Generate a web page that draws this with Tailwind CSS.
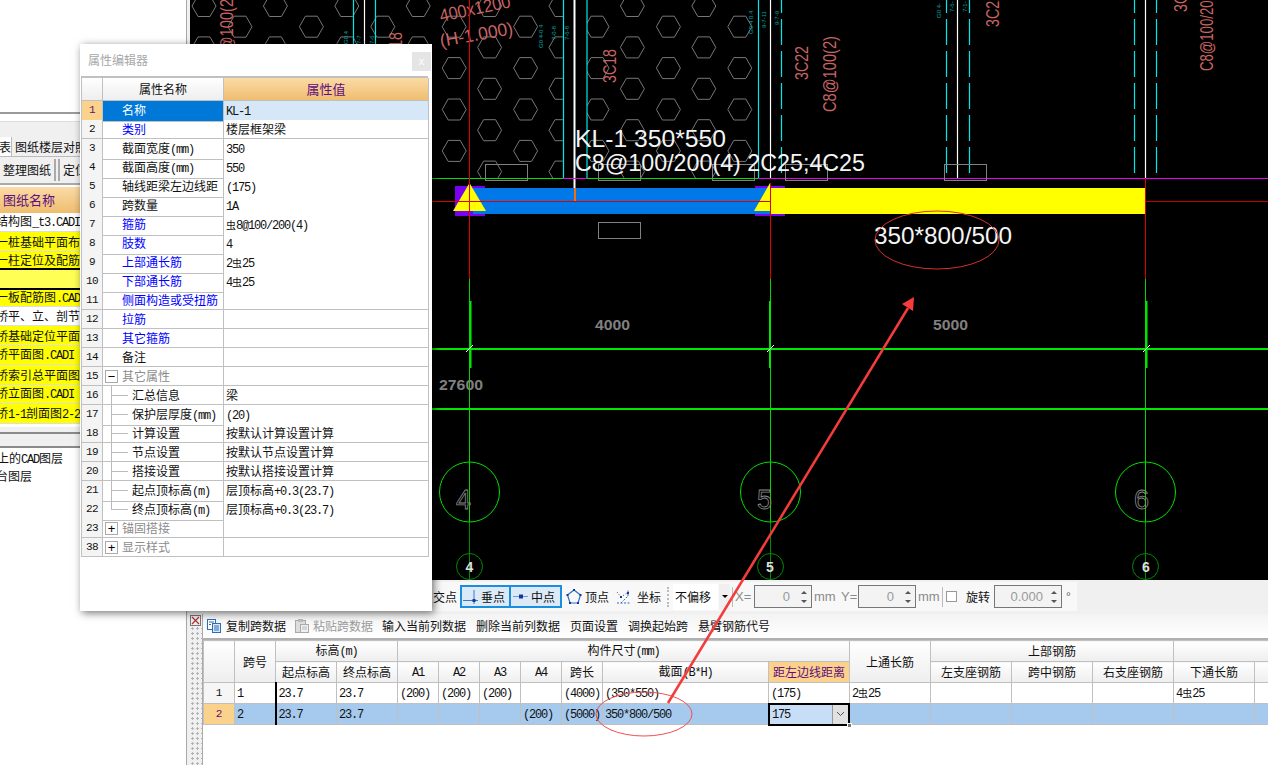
<!DOCTYPE html>
<html lang="zh">
<head>
  <meta charset="UTF-8" />
  <title>属性编辑器</title>
  <script src="https://cdn.jsdelivr.net/npm/@tailwindcss/browser@4"></script>
</head>
<body class="bg-white">
<div class="relative w-[1268px] h-[765px] overflow-hidden flex bg-white text-[12px] text-[#111] font-['Noto_Sans_CJK_SC','Liberation_Sans',sans-serif]">

  <!-- left panel -->
  <aside class="w-[186px] h-full flex flex-col shrink-0 overflow-hidden">
    <div class="h-[114px] border-b-2 border-[#9a9a9a] shrink-0"></div>
    <div class="h-[8px] bg-white border-b border-[#ddd] shrink-0"></div>
    <div class="h-[15px] bg-[#f0f0f0] shrink-0"></div>
    <div class="h-[20px] bg-[#f0f0f0] flex items-end shrink-0 border-b border-[#bbb] whitespace-nowrap">
      <div class="w-[12px] h-full bg-white border-r border-[#bbb] overflow-hidden flex justify-end items-center">表</div>
      <div class="px-[3px] h-[19px] leading-[19px]">图纸楼层对照表</div>
    </div>
    <div class="h-[28px] flex items-center gap-[2px] shrink-0 bg-[#f0f0f0] border-b-2 border-[#aaa] whitespace-nowrap">
      <div class="w-[56px] h-[22px] border-r-2 border-[#aaa] text-center leading-[22px]">整理图纸</div>
      <div class="pl-[3px] h-[22px] border-l-2 border-[#aaa] leading-[22px]">定位图纸</div>
    </div>
    <div class="h-[26px] mt-[2px] bg-gradient-to-b from-[#fbdba6] to-[#efbd6f] text-[#5f0f7f] text-[13px] leading-[26px] pl-[3px] shrink-0">图纸名称</div>
    <div id="drawings" class="flex flex-col shrink-0"></div>
    <div class="h-[3px] shrink-0"></div>
    <div class="h-[7px] bg-[#f0f0f0] border-b-2 border-[#8a8a8a] shrink-0"></div>
    <div class="h-[14px] bg-[#f0f0f0] border-b-2 border-[#8a8a8a] shrink-0"></div>
    <div class="pt-[2px] leading-[15px] whitespace-nowrap">
      <div class="-ml-[3px]" id="layer1"></div>
      <div class="-ml-[4px]">台图层</div>
    </div>
  </aside>
  <div class="w-[4px] h-full shrink-0 border-l border-[#a8a8a8] bg-[#f0f0f0]"></div>

  <main class="flex-1 min-w-0 flex flex-col">
    <!-- CAD canvas -->
    <div class="h-[580px] bg-black shrink-0 overflow-hidden">
      <svg id="cad" width="1078" height="580" viewBox="190 0 1078 580" font-family="Liberation Sans, sans-serif">
        <defs>
          <clipPath id="hexClip">
            <rect x="190" y="0" width="373" height="178"></rect>
            <rect x="587" y="0" width="170" height="178"></rect>
          </clipPath>
        </defs>
        <g id="hexes" clip-path="url(#hexClip)" fill="none" stroke="#777" stroke-width="1"></g>

        <!-- red labels -->
        <g fill="#c86464" font-size="18">
          <text transform="translate(441,22) rotate(-12)" textLength="72" lengthAdjust="spacingAndGlyphs">400x1200</text>
          <text transform="translate(441,47) rotate(-10)" textLength="74" lengthAdjust="spacingAndGlyphs">(H-1.000)</text>
          <text transform="translate(616,83) rotate(-90)" textLength="34" lengthAdjust="spacingAndGlyphs">3C18</text>
          <text transform="translate(808,80) rotate(-90)" textLength="34" lengthAdjust="spacingAndGlyphs">3C22</text>
          <text transform="translate(836,112) rotate(-90)" textLength="76" lengthAdjust="spacingAndGlyphs">C8@100(2)</text>
          <text transform="translate(999,27) rotate(-90)" textLength="34" lengthAdjust="spacingAndGlyphs">3C22</text>
          <text transform="translate(1187,12) rotate(-90)" textLength="34" lengthAdjust="spacingAndGlyphs">3C22</text>
          <text transform="translate(1213,71) rotate(-90)" textLength="78" lengthAdjust="spacingAndGlyphs">C8@100/200</text>
          <text transform="translate(402,66) rotate(-90)" textLength="34" lengthAdjust="spacingAndGlyphs">3C18</text>
          <text transform="translate(233,70) rotate(-90)" textLength="76" lengthAdjust="spacingAndGlyphs">C8@100(2)</text>
        </g>

        <!-- teal small labels -->
        <g fill="#00a8a8" font-size="6">
          <text transform="translate(543,48) rotate(-90)">G0 4-0 4</text>
          <text transform="translate(556,40) rotate(-90)">7-0-8</text>
          <text transform="translate(569,40) rotate(-90)">7-6-8</text>
          <text transform="translate(753,34) rotate(-90)">G0-4 0.4</text>
          <text transform="translate(766,28) rotate(-90)">9-7-11</text>
          <text transform="translate(779,25) rotate(-90)">9-7-9</text>
          <text transform="translate(941,18) rotate(-90)">G0 4-</text>
          <text transform="translate(954,12) rotate(-90)">7-6-</text>
          <text transform="translate(967,12) rotate(-90)">7-1-</text>
          <text transform="translate(348,44) rotate(-90)">G0.4</text>
          <text transform="translate(361,44) rotate(-90)">7-7</text>
          <text transform="translate(374,44) rotate(-90)">7-6</text>
        </g>

        <!-- rebar lines -->
        <g stroke="#00e8e8" stroke-width="1.2">
          <path d="M563.5 0V178M587 0V178M758.5 0V178M353.5 0V178M375.5 0V178"></path>
          <path stroke-dasharray="26 6" stroke-dashoffset="13" d="M781.5 0V173M946.5 0V173M969.5 0V173M1134.5 0V173M1156.5 0V173"></path>
        </g>
        <g stroke="#fff" stroke-width="1.2">
          <path d="M770.5 0V178M957.5 0V178M1145.5 0V178M364.5 0V178"></path>
          <path stroke-width="2" d="M574.5 0V188"></path>
        </g>
        <path d="M190 178.5H563M587 178.5H758" stroke="#00e000" stroke-width="1"></path>
        <path d="M563 178.5H587M758 178.5H1268" stroke="#f000f0" stroke-width="1"></path>

        <!-- beam -->
        <rect x="455" y="186" width="30" height="30" fill="#7a00f0"></rect>
        <rect x="755" y="186" width="30" height="30" fill="#7a00f0"></rect>
        <rect x="473" y="188" width="297" height="26" fill="#0078e8"></rect>
        <rect x="770" y="188" width="376" height="26" fill="#ffff00"></rect>
        <polygon points="469.5,183 486,211 453,211" fill="#ffff00"></polygon>
        <polygon points="770,183 770,211 754,211" fill="#ffff00"></polygon>
        <rect x="574" y="188" width="2" height="13" fill="#f07010"></rect>
        <path d="M432 201.5H770" stroke="#e00000" stroke-width="1"></path>
        <path d="M1146 201.5H1268" stroke="#c00000" stroke-width="1"></path>

        <!-- axis lines -->
        <g stroke="#e00000" stroke-width="1">
          <path d="M469.5 0V279M770.5 183V279M1145.5 178V279"></path>
        </g>
        <g stroke="#00d800" stroke-width="1">
          <path d="M469.5 279V522M770.5 279V522M1145.5 279V522"></path>
        </g>
        <g stroke="#008c00" stroke-width="1">
          <path d="M469.5 522V580M770.5 522V580M1145.5 522V580"></path>
        </g>
        <g stroke="#00e800" stroke-width="2">
          <path d="M432 349H1268M432 409H1268"></path>
          <path d="M470.5 301V368M770 301V368M1146.5 301V368"></path>
        </g>
        <path d="M466 352L473 345M767 352L774 345M1143 352L1150 345" stroke="#fff" stroke-width="1"></path>

        <!-- gray boxes -->
        <g fill="none" stroke="#808080" stroke-width="1">
          <rect x="485.5" y="164.5" width="42" height="16"></rect>
          <rect x="598.5" y="164.5" width="42" height="16"></rect>
          <rect x="712.5" y="164.5" width="42" height="16"></rect>
          <rect x="785.5" y="164.5" width="42" height="16"></rect>
          <rect x="944.5" y="164.5" width="42" height="16"></rect>
          <rect x="598.5" y="222.5" width="42" height="16"></rect>
        </g>

        <!-- axis bubbles -->
        <g fill="none" stroke="#00e000" stroke-width="1">
          <circle cx="469.5" cy="492" r="30"></circle>
          <circle cx="770.5" cy="492" r="30"></circle>
          <circle cx="1145.5" cy="492" r="30"></circle>
        </g>
        <g fill="none" stroke="#008c00" stroke-width="1">
          <circle cx="469.5" cy="566.5" r="13"></circle>
          <circle cx="770.5" cy="566.5" r="13"></circle>
          <circle cx="1145.5" cy="566.5" r="13"></circle>
        </g>
        <g fill="none" stroke="#8a8a8a" stroke-width="0.8" font-size="27">
          <text x="456" y="509">4</text>
          <text x="757" y="509">5</text>
          <text x="1134" y="509">6</text>
        </g>
        <g fill="#ddd" font-size="14" font-weight="700" text-anchor="middle">
          <text x="469.5" y="572">4</text>
          <text x="770" y="572">5</text>
          <text x="1146" y="572">6</text>
        </g>
        <g fill="#808080" font-size="15" font-weight="700">
          <text x="595" y="330" textLength="35" lengthAdjust="spacingAndGlyphs">4000</text>
          <text x="933" y="330" textLength="35" lengthAdjust="spacingAndGlyphs">5000</text>
          <text x="439" y="390" textLength="44" lengthAdjust="spacingAndGlyphs">27600</text>
        </g>

        <!-- beam annotation -->
        <g fill="#f4f4f4" font-size="24">
          <text x="575" y="147" textLength="151" lengthAdjust="spacingAndGlyphs">KL-1 350*550</text>
          <text x="575" y="171" textLength="290" lengthAdjust="spacingAndGlyphs">C8@100/200(4) 2C25;4C25</text>
          <text x="874" y="244" textLength="138" lengthAdjust="spacingAndGlyphs">350*800/500</text>
        </g>
      </svg>
    </div>

    <!-- snap toolbar -->
    <div class="h-[34px] shrink-0 bg-[#f0f0f0] flex items-start whitespace-nowrap">
      <div class="ml-[242px] mt-[2px] h-[29px] w-[645px] bg-[#f8f8f8] flex items-center">
        <span class="w-[28px] pl-[1px]">交点</span>
        <div class="w-[51px] h-[23px] border-2 border-[#1a8fe0] bg-[#dce9f7] flex items-center gap-[3px] pl-[1px]">
          <svg width="15" height="15" viewBox="0 0 15 15"><path d="M0 11.5H15M11 1V15" stroke="#3a78c8" fill="none"></path><rect x="9.5" y="10" width="3" height="3" fill="#14389a"></rect></svg>
          <span>垂点</span>
        </div>
        <div class="w-[51px] h-[23px] border-2 border-l-0 border-[#1a8fe0] bg-[#dce9f7] flex items-center gap-[3px] pl-[2px]">
          <svg width="15" height="15" viewBox="0 0 15 15"><path d="M0 7.5H16" stroke="#6a9ad8" fill="none"></path><rect x="6" y="5.5" width="4" height="4" fill="#14389a"></rect></svg>
          <span>中点</span>
        </div>
        <svg class="ml-[4px]" width="16" height="17" viewBox="0 0 16 17"><polygon points="8,2 14.5,7 12,15 4,15 1.5,7" fill="none" stroke="#2a70c8" stroke-width="1.2"></polygon><g fill="#14389a"><rect x="7" y="1" width="2" height="2"></rect><rect x="0.5" y="6" width="2" height="2"></rect><rect x="13.5" y="6" width="2" height="2"></rect><rect x="3" y="14" width="2" height="2"></rect><rect x="11" y="14" width="2" height="2"></rect></g></svg>
        <span class="ml-[3px]">顶点</span>
        <svg class="ml-[7px]" width="16" height="17" viewBox="0 0 16 17"><path d="M5 15L12 8M12 8V1M1 15H15" stroke="#2a70c8" fill="none" stroke-dasharray="2 1.5"></path><path d="M1 4L5 9L11 5" stroke="#444" fill="none" stroke-dasharray="1 2"></path><g fill="#14389a"><rect x="4" y="8" width="2" height="2"></rect><rect x="11" y="4" width="2" height="2"></rect></g></svg>
        <span class="ml-[5px]">坐标</span>
        <div class="ml-[6px] w-[2px] h-[20px] border-l-2 border-dotted border-[#bbb]"></div>
        <div class="ml-[4px] w-[45px] h-[26px] bg-white leading-[26px] pl-[2px]">不偏移</div>
        <div class="w-[11px] h-[26px] ml-[1px] bg-[#f0f0f0] flex items-center justify-center"><div class="w-0 h-0 border-x-[3px] border-x-transparent border-t-[3px] border-t-black"></div></div>
        <div class="ml-[2px] w-px h-[20px] bg-[#bbb]"></div>
        <span class="ml-[2px] w-[19px] text-[#8a8a8a] font-['Liberation_Sans'] text-[13px]">X=</span>
        <div class="w-[58px] h-[23px] border border-[#777] bg-[#f3f3f3] flex items-center justify-end text-[#9a9a9a] font-['Liberation_Sans'] text-[13px]"><span>0</span>
          <div class="w-[15px] ml-[6px] flex flex-col items-center gap-[6px]"><div class="w-0 h-0 border-x-[3px] border-x-transparent border-b-[3px] border-b-[#555]"></div><div class="w-0 h-0 border-x-[3px] border-x-transparent border-t-[3px] border-t-[#555]"></div></div>
        </div>
        <span class="ml-[2px] w-[27px] text-[#8a8a8a] font-['Liberation_Sans'] text-[13px]">mm</span>
        <span class="w-[17px] text-[#8a8a8a] font-['Liberation_Sans'] text-[13px]">Y=</span>
        <div class="w-[58px] h-[23px] border border-[#777] bg-[#f3f3f3] flex items-center justify-end text-[#9a9a9a] font-['Liberation_Sans'] text-[13px]"><span>0</span>
          <div class="w-[15px] ml-[6px] flex flex-col items-center gap-[6px]"><div class="w-0 h-0 border-x-[3px] border-x-transparent border-b-[3px] border-b-[#555]"></div><div class="w-0 h-0 border-x-[3px] border-x-transparent border-t-[3px] border-t-[#555]"></div></div>
        </div>
        <span class="ml-[2px] w-[24px] text-[#8a8a8a] font-['Liberation_Sans'] text-[13px]">mm</span>
        <div class="w-px h-[20px] bg-[#bbb]"></div>
        <div class="ml-[3px] w-[11px] h-[11px] border border-[#999] bg-white"></div>
        <span class="ml-[9px] w-[28px]">旋转</span>
        <div class="w-[68px] h-[23px] border border-[#777] bg-[#f3f3f3] flex items-center justify-end text-[#9a9a9a] font-['Liberation_Sans'] text-[13px]"><span>0.000</span>
          <div class="w-[15px] ml-[3px] flex flex-col items-center gap-[6px]"><div class="w-0 h-0 border-x-[3px] border-x-transparent border-b-[3px] border-b-[#555]"></div><div class="w-0 h-0 border-x-[3px] border-x-transparent border-t-[3px] border-t-[#555]"></div></div>
        </div>
        <span class="ml-[4px] text-[#666] font-['Liberation_Sans']">°</span>
      </div>
    </div>

    <!-- grid area -->
    <div class="flex-1 min-h-0 flex">
      <div class="w-[13px] shrink-0 flex flex-col bg-[#f0f0f0] border-r border-[#aaa]">
        <svg class="shrink-0 mt-[1px]" width="11" height="11" viewBox="0 0 11 11"><rect x="0.5" y="0.5" width="10" height="10" fill="#eee" stroke="#777"></rect><path d="M2 2L9 9M9 2L2 9" stroke="#b03030" stroke-width="1.2"></path></svg>
        <div class="flex-1 bg-[radial-gradient(#b4b4b4_1px,transparent_1.2px)] bg-[size:5px_5px]"></div>
      </div>
      <div class="flex-1 min-w-0 flex flex-col">
        <div class="h-[26px] shrink-0 bg-gradient-to-b from-[#f3f3f3] to-white border-b-2 border-[#b0b0b0] flex items-center gap-[10px] whitespace-nowrap pl-[3px]">
          <div class="flex items-center gap-[4px]">
            <svg width="16" height="16" viewBox="0 0 16 16"><rect x="1.5" y="1.5" width="8" height="10" fill="#fff" stroke="#2c6cb8"></rect><rect x="6.5" y="5.5" width="8" height="9" fill="#dceaf8" stroke="#2c6cb8"></rect><path d="M3 4H8M3 6.5H5M8 8H13M8 10H13M8 12H13" stroke="#2c6cb8"></path></svg>
            <span>复制跨数据</span>
          </div>
          <div class="flex items-center gap-[3px] text-[#9a9a9a] -ml-[2px]">
            <svg width="16" height="16" viewBox="0 0 16 16"><rect x="1.5" y="2.5" width="10" height="12" fill="#ddd" stroke="#aaa"></rect><rect x="4" y="1" width="5" height="3" fill="#bbb"></rect><rect x="6.5" y="6.5" width="8" height="8" fill="#f0f0f0" stroke="#aaa"></rect><path d="M8 9H13M8 11H13" stroke="#bbb"></path></svg>
            <span>粘贴跨数据</span>
          </div>
          <span class="-ml-[1px]">输入当前列数据</span>
          <span>删除当前列数据</span>
          <span>页面设置</span>
          <span>调换起始跨</span>
          <span>悬臂钢筋代号</span>
        </div>
        <div class="flex-1 min-h-0 overflow-hidden">
          <table class="table-fixed border-collapse w-[1213px]">
            <colgroup id="cols"></colgroup>
            <tbody id="grid"></tbody>
          </table>
        </div>
      </div>
    </div>
  </main>

  <!-- annotations on top of everything -->
  <svg class="absolute left-0 top-0 pointer-events-none" width="1268" height="765" viewBox="0 0 1268 765">
    <ellipse cx="937" cy="240" rx="62" ry="29" fill="none" stroke="#d83030" stroke-width="1"></ellipse>
    <ellipse cx="644" cy="714" rx="48" ry="22" fill="none" stroke="#f05050" stroke-width="1"></ellipse>
    <path d="M668 703L908 308" stroke="#f43c3c" stroke-width="2.5" fill="none"></path>
    <polygon points="914,297 913,311 902,304" fill="#f43c3c"></polygon>
  </svg>

  <!-- property dialog -->
  <div class="absolute left-[80px] top-[44px] w-[352px] h-[567px] bg-white shadow-[2px_2px_8px_rgba(0,0,0,0.55)]">
    <div class="h-[32px] flex items-center justify-between pl-[8px] pr-[1px]">
      <span class="text-[#a8a8a8]">属性编辑器</span>
      <div class="w-[19px] h-[19px] mt-[2px] bg-[#e5e5e5] text-white text-center leading-[18px] font-['Liberation_Sans'] text-[11px]">x</div>
    </div>
    <div id="props" class="ml-[1px] w-[347px] border-t-2 border-l border-[#c0c0c0]"></div>
  </div>
</div>

<script>
  // ascii runs use a half width look next to the cjk text
  function t(s) {
    return s.replace(/[\x21-\x7e]+/g, m => `<span class="font-['Liberation_Mono'] tracking-[-1.2px]">${m}</span>`)
            .replace(/虫/g, `<span class="text-[10px]">虫</span>`);
  }

  document.getElementById('layer1').innerHTML = t('上的CAD图层');

  // hex hatch in the slab
  let hexes = '';
  for (let k = 0; k < 9; k++) {
    const y = 6 + 20.7 * k;
    const start = k % 2 ? 240 : 204;
    for (let x = start; x < 780; x += 71.4) {
      hexes += `<polygon points="${x-12},${y} ${x-6},${y-10.5} ${x+6},${y-10.5} ${x+12},${y} ${x+6},${y+10.5} ${x-6},${y+10.5}"></polygon>`;
    }
  }
  document.getElementById('hexes').innerHTML = hexes;

  // drawing list on the left
  const drawings = [
    ['结构图_t3.CADI', 'h-[19px] bg-white border-b border-[#ddd]'],
    ['一桩基础平面布置图', 'h-[20px] bg-[#ffff00] border-b border-[#ddd]'],
    ['一柱定位及配筋图', 'h-[18px] bg-[#ffff00] border-b-2 border-black'],
    ['', 'h-[20px] bg-[#ffff55] border-b-2 border-black'],
    ['一板配筋图.CADI', 'h-[17px] bg-[#ffff00] border-b border-[#ddd]'],
    ['桥平、立、剖节', 'h-[19px] bg-white border-b border-[#ddd]'],
    ['桥基础定位平面图', 'h-[20px] bg-[#ffff00] border-b border-[#ddd]'],
    ['桥平面图.CADI', 'h-[19px] bg-[#ffff00] border-b border-[#ddd]'],
    ['桥索引总平面图', 'h-[20px] bg-[#ffff00] border-b border-[#ddd]'],
    ['桥立面图.CADI', 'h-[19px] bg-[#ffff00] border-b border-[#ddd]'],
    ['桥1-1剖面图2-2', 'h-[20px] bg-[#ffff00] border-b border-[#ddd]'],
  ];
  document.getElementById('drawings').innerHTML = drawings.map(([name, cls]) =>
    `<div class="${cls} flex items-center whitespace-nowrap overflow-hidden"><span class="-ml-[4px]">${t(name)}</span></div>`).join('');

  // property rows: number, name, value, kind
  const props = [
    ['1', '名称', 'KL-1', 'sel'],
    ['2', '类别', '楼层框架梁', 'b'],
    ['3', '截面宽度(mm)', '350', 'k'],
    ['4', '截面高度(mm)', '550', 'k'],
    ['5', '轴线距梁左边线距', '(175)', 'k'],
    ['6', '跨数量', '1A', 'k'],
    ['7', '箍筋', '虫8@100/200(4)', 'b'],
    ['8', '肢数', '4', 'b'],
    ['9', '上部通长筋', '2虫25', 'b'],
    ['10', '下部通长筋', '4虫25', 'b'],
    ['11', '侧面构造或受扭筋', '', 'b'],
    ['12', '拉筋', '', 'b'],
    ['13', '其它箍筋', '', 'b'],
    ['14', '备注', '', 'k'],
    ['15', '其它属性', '', 'open'],
    ['16', '汇总信息', '梁', 's'],
    ['17', '保护层厚度(mm)', '(20)', 's'],
    ['18', '计算设置', '按默认计算设置计算', 's'],
    ['19', '节点设置', '按默认节点设置计算', 's'],
    ['20', '搭接设置', '按默认搭接设置计算', 's'],
    ['21', '起点顶标高(m)', '层顶标高+0.3(23.7)', 's'],
    ['22', '终点顶标高(m)', '层顶标高+0.3(23.7)', 'last'],
    ['23', '锚固搭接', '', 'closed'],
    ['38', '显示样式', '', 'closed'],
  ];
  const treeBox = sign => `<span class="absolute left-[2px] top-[3px] w-[13px] h-[13px] border border-[#aaa] text-black text-center leading-[11px] font-['Liberation_Sans'] text-[13px]">${sign}</span>`;
  let rows = `<div class="grid grid-cols-[21px_121px_205px] h-[23px]">
    <div class="border-r border-b border-[#c0c0c0] bg-gradient-to-b from-white to-[#eee]"></div>
    <div class="border-r border-b border-[#c0c0c0] bg-gradient-to-b from-white to-[#eee] text-center text-[12px] leading-[22px]">属性名称</div>
    <div class="border-r border-b border-[#c0c0c0] bg-gradient-to-b from-[#fbdba6] to-[#efbd6f] text-center text-[#5f0f7f] text-[13px] leading-[22px]">属性值</div>
  </div>`;
  props.forEach(([num, name, value, kind]) => {
    let idx = 'bg-[#f4f4f4]', nameCls = 'pl-[19px]', extra = '', valCls = 'bg-white';
    if (kind === 'sel') { idx = 'bg-[#fbd28c] text-[#5f0f7f]'; nameCls = 'pl-[19px] bg-[#0078d7] text-white'; valCls = 'bg-[#d6e8f8]'; }
    if (kind === 'b') nameCls = 'pl-[19px] text-[#0000ff]';
    if (kind === 'open') { nameCls = 'pl-[19px] text-[#8c8c8c]'; extra = treeBox('−'); }
    if (kind === 'closed') { nameCls = 'pl-[19px] text-[#8c8c8c]'; extra = treeBox('+'); }
    if (kind === 's') { nameCls = 'pl-[29px]'; extra = '<span class="absolute left-[8px] top-0 w-px h-full bg-[#bbb]"></span><span class="absolute left-[8px] top-[9px] w-[17px] h-px bg-[#bbb]"></span>'; }
    if (kind === 'last') { nameCls = 'pl-[29px]'; extra = '<span class="absolute left-[8px] top-0 w-px h-[10px] bg-[#bbb]"></span><span class="absolute left-[8px] top-[9px] w-[17px] h-px bg-[#bbb]"></span>'; }
    rows += `<div class="grid grid-cols-[21px_121px_205px] h-[19px] leading-[18px] whitespace-nowrap">
      <div class="border-r border-b border-[#c0c0c0] text-center font-['Liberation_Mono'] text-[11px] tracking-[-0.6px] ${idx}">${num}</div>
      <div class="relative border-r border-b border-[#c0c0c0] ${nameCls}">${extra}${t(name)}</div>
      <div class="border-r border-b border-[#c0c0c0] pl-[2px] ${valCls}">${t(value)}</div>
    </div>`;
  });
  document.getElementById('props').innerHTML = rows;

  // span table
  const widths = [31, 41, 61, 61, 41, 41, 41, 41, 41, 166, 81, 81, 81, 81, 81, 81, 81, 81];
  document.getElementById('cols').innerHTML = widths.map(w => `<col style="width:${w}px">`).join('');

  const head = 'font-normal text-center p-0 h-[19px] border border-[#c0c0c0] bg-gradient-to-b from-white to-[#eee] whitespace-nowrap overflow-hidden';
  const th = (s, c = 1, r = 1) => `<th colspan="${c}" rowspan="${r}" class="${head}">${t(s)}</th>`;
  const cell = 'p-0 pl-[2px] h-[19px] border border-[#c0c0c0] whitespace-nowrap overflow-hidden text-left';
  const td = s => `<td class="${cell}">${t(s)}</td>`;

  const row1 = ['1', '23.7', '23.7', '(200)', '(200)', '(200)', '', '(4000)', '(350*550)', '(175)', '2虫25', '', '', '', '4虫25', '', ''];
  const row2 = ['2', '23.7', '23.7', '', '', '', '(200)', '(5000)', '350*800/500', null, '', '', '', '', '', '', ''];

  const grid =
    '<tr>' + th('', 1, 2) + th('跨号', 1, 2) + th('标高(m)', 2) + th('构件尺寸(mm)', 7) + th('上通长筋', 1, 2) + th('上部钢筋', 3) + th('下部钢筋', 3) + '</tr>' +
    '<tr>' + th('起点标高') + th('终点标高') + th('A1') + th('A2') + th('A3') + th('A4') + th('跨长') + th('截面(B*H)') +
      `<th class="font-normal text-center p-0 h-[19px] border border-[#c0c0c0] bg-[#fbd28c] text-[#5f0f7f]">距左边线距离</th>` +
      th('左支座钢筋') + th('跨中钢筋') + th('右支座钢筋') + th('下通长筋') + th('') + th('') + '</tr>' +
    `<tr class="bg-white"><td class="p-0 h-[19px] border border-[#c0c0c0] text-center bg-[#f6f6f6] font-['Liberation_Mono'] text-[11px]">1</td>` +
      row1.map((s, i) => i === 1
        ? `<td class="p-0 pl-[2px] h-[19px] border border-[#c0c0c0] border-l-2 border-l-black whitespace-nowrap overflow-hidden">${t(s)}</td>`
        : td(s)).join('') + '</tr>' +
    `<tr class="bg-[#a6c9ee]"><td class="p-0 h-[19px] border border-[#c0c0c0] text-center bg-[#fbd28c] text-[#5f0f7f] font-['Liberation_Mono'] text-[11px]">2</td>` +
      row2.map((s, i) => {
        if (i === 1) return `<td class="p-0 pl-[2px] h-[19px] border border-[#c0c0c0] border-l-2 border-l-black whitespace-nowrap overflow-hidden">${t(s)}</td>`;
        if (s === null) return `<td class="p-0 h-[19px] relative"><div class="absolute -left-px -top-px -right-px -bottom-px border-2 border-black bg-[#c8def6] flex items-center justify-between pl-[2px]"><span>${t('175')}</span><span class="w-[16px] h-full bg-[#e1e1e1] border-l border-[#999] flex items-center justify-center"><svg width="9" height="6" viewBox="0 0 9 6"><path d="M1 1L4.5 4.5L8 1" fill="none" stroke="#555"></path></svg></span></div><span class="absolute -right-[3px] -bottom-[3px] w-[5px] h-[5px] bg-[#777] border border-white"></span></td>`;
        return td(s);
      }).join('') + '</tr>';
  document.getElementById('grid').innerHTML = grid;
</script>
</body>
</html>
